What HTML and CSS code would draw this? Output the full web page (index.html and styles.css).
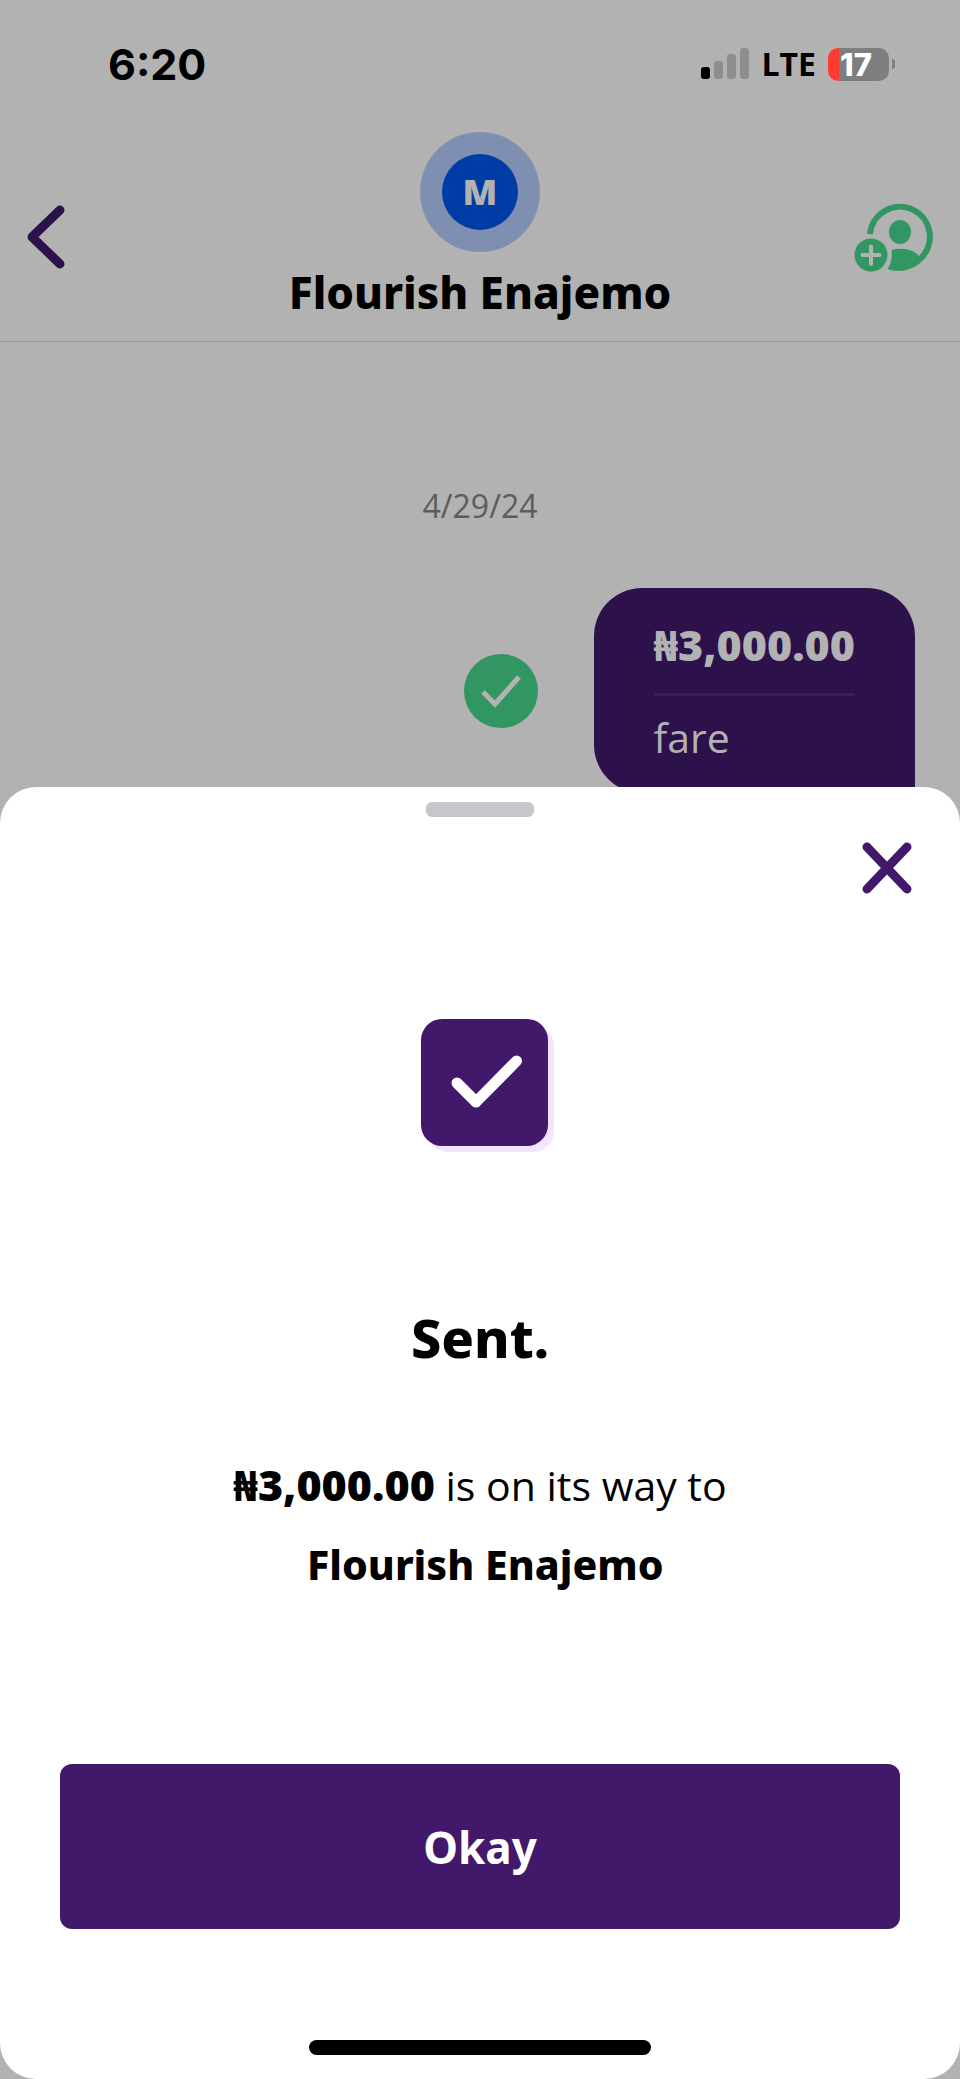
FILE: index.html
```html
<!DOCTYPE html>
<html lang="en">
<head>
<meta charset="utf-8">
<meta name="viewport" content="width=device-width, initial-scale=1">
<title>Payment sent</title>
<link rel="stylesheet" href="styles.css">
</head>
<body>
<div class="status">
  <span class="time">6:20</span>
  <div class="indicators">
    <svg class="signal" viewBox="0 0 48 32" aria-hidden="true">
      <rect x="0" y="19" width="9" height="12" rx="3"/>
      <g class="signal-off">
        <rect x="13" y="13" width="9" height="18" rx="3"/>
        <rect x="26" y="6" width="9" height="25" rx="3"/>
        <rect x="39" y="0" width="9" height="31" rx="3"/>
      </g>
    </svg>
    <span class="network">LTE</span>
    <span class="battery"><span class="level">17</span></span>
  </div>
</div>
<header class="header">
  <button class="icon-button" aria-label="Back">
    <svg class="back" viewBox="0 0 38 64"><path d="M33 5 5 32 33 59"/></svg>
  </button>
  <div class="contact">
    <div class="avatar"><span class="initial">M</span></div>
    <h1 class="name">Flourish Enajemo</h1>
  </div>
  <button class="icon-button add" aria-label="Add contact">
    <svg class="person" viewBox="0 0 78 66">
      <path class="ring" d="M15 30A30 30 0 1 1 65 55"/>
      <ellipse cx="45" cy="28" rx="11" ry="12"/>
      <path d="M36.500 46C46 43.500 58 45 64 52L69 55A33 33 0 0 1 32.500 65C36 60 37.500 53 36.500 46Z"/>
      <circle cx="16" cy="51" r="16.500"/>
      <path class="plus" d="M16 42.500V60M7.500 51H24.500"/>
    </svg>
  </button>
</header>
<main class="chat">
  <time class="date">4/29/24</time>
  <div class="message">
    <svg class="delivered" viewBox="0 0 74 74" role="img" aria-label="Delivered">
      <circle cx="37" cy="37" r="37"/>
      <path d="M19 38 31 50 55 23"/>
    </svg>
    <div class="bubble">
      <div class="amount">₦3,000.00</div>
      <div class="note">fare</div>
    </div>
  </div>
</main>
<section class="sheet" role="dialog" aria-labelledby="title">
  <div class="grabber"></div>
  <button class="icon-button close" aria-label="Close">
    <svg class="cross" viewBox="0 0 50 52"><path d="M5 5 45 47M45 5 5 47"/></svg>
  </button>
  <svg class="success" viewBox="0 0 134 134" aria-hidden="true">
    <rect class="shade" x="6" y="6" width="127" height="127" rx="21"/>
    <rect class="tile" x="0" y="0" width="127" height="127" rx="21"/>
    <path d="M36 64 55 83 95.500 42"/>
  </svg>
  <h2 class="title" id="title">Sent.</h2>
  <p class="detail"><strong class="sum">₦3,000.00</strong> is on its way to<br>&nbsp;<strong class="payee">Flourish Enajemo</strong></p>
  <button class="okay">Okay</button>
  <div class="home"></div>
</section>
</body>
</html>
```

FILE: styles.css
```css
:root {
  --purple: #41186a;
  --purple-dim: #2d114a;
  --green: #329663;
  --dim: #b2b2b2;
}

* {
  box-sizing: border-box;
}

body {
  margin: 0;
  min-height: 100vh;
  display: flex;
  flex-direction: column;
  background: var(--dim);
  color: #000;
  font-family: "Noto Sans", sans-serif;
}

svg {
  display: block;
  flex: none;
}

button {
  border: 0;
  font: inherit;
  cursor: pointer;
}

.status {
  display: flex;
  align-items: center;
  justify-content: space-between;
  height: 128px;
  padding: 0 65px 0 108px;
}

.time {
  font: 700 43px/1 Inter, sans-serif;
}

.indicators {
  display: flex;
  align-items: center;
  gap: 12px;
}

.signal {
  width: 48px;
  height: 32px;
}

.signal-off {
  fill: #8e8e8e;
}

.network {
  font: 700 32px/1 "Open Sans", sans-serif;
}

.battery {
  display: flex;
  align-items: center;
  gap: 3px;
}

.battery::after {
  content: "";
  width: 3px;
  height: 10px;
  border-radius: 0 3px 3px 0;
  background: #7e7e7e;
}

.level {
  width: 61px;
  height: 33px;
  padding-left: 12px;
  border-radius: 10px;
  background: linear-gradient(90deg, #ff3b30 11px, #7e7e7e 11px);
  color: #fff;
  font: 800 31px/33px Inter, sans-serif;
}

.header {
  display: grid;
  grid-template-columns: 1fr auto 1fr;
  align-items: center;
  height: 214px;
  padding: 4px 27px 0;
  border-bottom: 1px solid #999;
}

.icon-button {
  justify-self: start;
  padding: 0;
  background: none;
}

.add {
  justify-self: end;
}

.back {
  width: 38px;
  height: 64px;
}

.back path,
.cross path {
  fill: none;
  stroke: var(--purple-dim);
  stroke-width: 9px;
  stroke-linecap: round;
  stroke-linejoin: round;
}

.contact {
  align-self: start;
  display: flex;
  flex-direction: column;
  align-items: center;
  gap: 12px;
}

.avatar {
  display: grid;
  place-items: center;
  width: 120px;
  height: 120px;
  border-radius: 50%;
  background: #7f8fb2;
}

.initial {
  width: 76px;
  height: 76px;
  border-radius: 50%;
  background: #003ca6;
  color: var(--dim);
  font-size: 36px;
  font-weight: 900;
  line-height: 76px;
  text-align: center;
}

.name {
  margin: 0;
  font-size: 44px;
  font-weight: 800;
  line-height: 56px;
}

.person {
  width: 78px;
  height: 66px;
  overflow: visible;
  fill: var(--green);
}

.ring {
  fill: none;
  stroke: var(--green);
  stroke-width: 6px;
}

.plus {
  stroke: var(--dim);
  stroke-width: 4px;
  stroke-linecap: round;
}

.chat {
  display: flex;
  flex-direction: column;
  padding: 140px 45px 0;
}

.date {
  align-self: center;
  color: #5c5c5c;
  font: 400 32px/48px "Open Sans", sans-serif;
}

.message {
  display: flex;
  align-items: center;
  justify-content: flex-end;
  gap: 56px;
  margin-top: 58px;
}

.delivered {
  width: 74px;
  height: 74px;
  fill: var(--green);
}

.delivered path {
  fill: none;
  stroke: var(--dim);
  stroke-width: 5px;
}

.bubble {
  padding: 27px 60px 24px;
  border-radius: 48px 48px 0 48px;
  background: var(--purple-dim);
  color: var(--dim);
  font-size: 43px;
}

.amount {
  padding-bottom: 18px;
  border-bottom: 3px solid #372057;
  font-weight: 900;
  line-height: 60px;
}

.note {
  padding-top: 9px;
  font: 400 41px/64px "Open Sans", sans-serif;
}

.sheet {
  position: relative;
  flex: 1;
  display: flex;
  flex-direction: column;
  align-items: center;
  margin-top: -6px;
  padding: 15px 60px 24px;
  border-radius: 36px;
  background: #fff;
}

.grabber {
  width: 108px;
  height: 15px;
  border-radius: 6px;
  background: #c6c6cb;
}

.close {
  align-self: flex-end;
  margin: 25px -12px 0 0;
}

.cross {
  width: 50px;
  height: 52px;
}

.cross path {
  stroke: var(--purple);
}

.success {
  width: 134px;
  height: 134px;
  margin: 125px 0 0 16px;
}

.shade {
  fill: #f3e5fe;
}

.tile {
  fill: var(--purple);
}

.success path {
  fill: none;
  stroke: #fff;
  stroke-width: 11px;
  stroke-linecap: round;
  stroke-linejoin: round;
}

.title {
  margin: 146px 0 0;
  font-size: 54px;
  font-weight: 800;
  line-height: 76px;
}

.detail {
  margin: 70px 0 0;
  font: 400 41px/79px "Open Sans", sans-serif;
  text-align: center;
}

.sum,
.payee {
  font-family: "Noto Sans", sans-serif;
  font-weight: 800;
}

.sum {
  font-size: 43px;
  font-weight: 900;
}

.okay {
  width: 100%;
  height: 165px;
  margin-top: 160px;
  border-radius: 12px;
  background: var(--purple);
  color: #fff;
  font-size: 44px;
  font-weight: 700;
}

.home {
  width: 342px;
  height: 15px;
  margin-top: auto;
  border-radius: 8px;
  background: #000;
}
```
